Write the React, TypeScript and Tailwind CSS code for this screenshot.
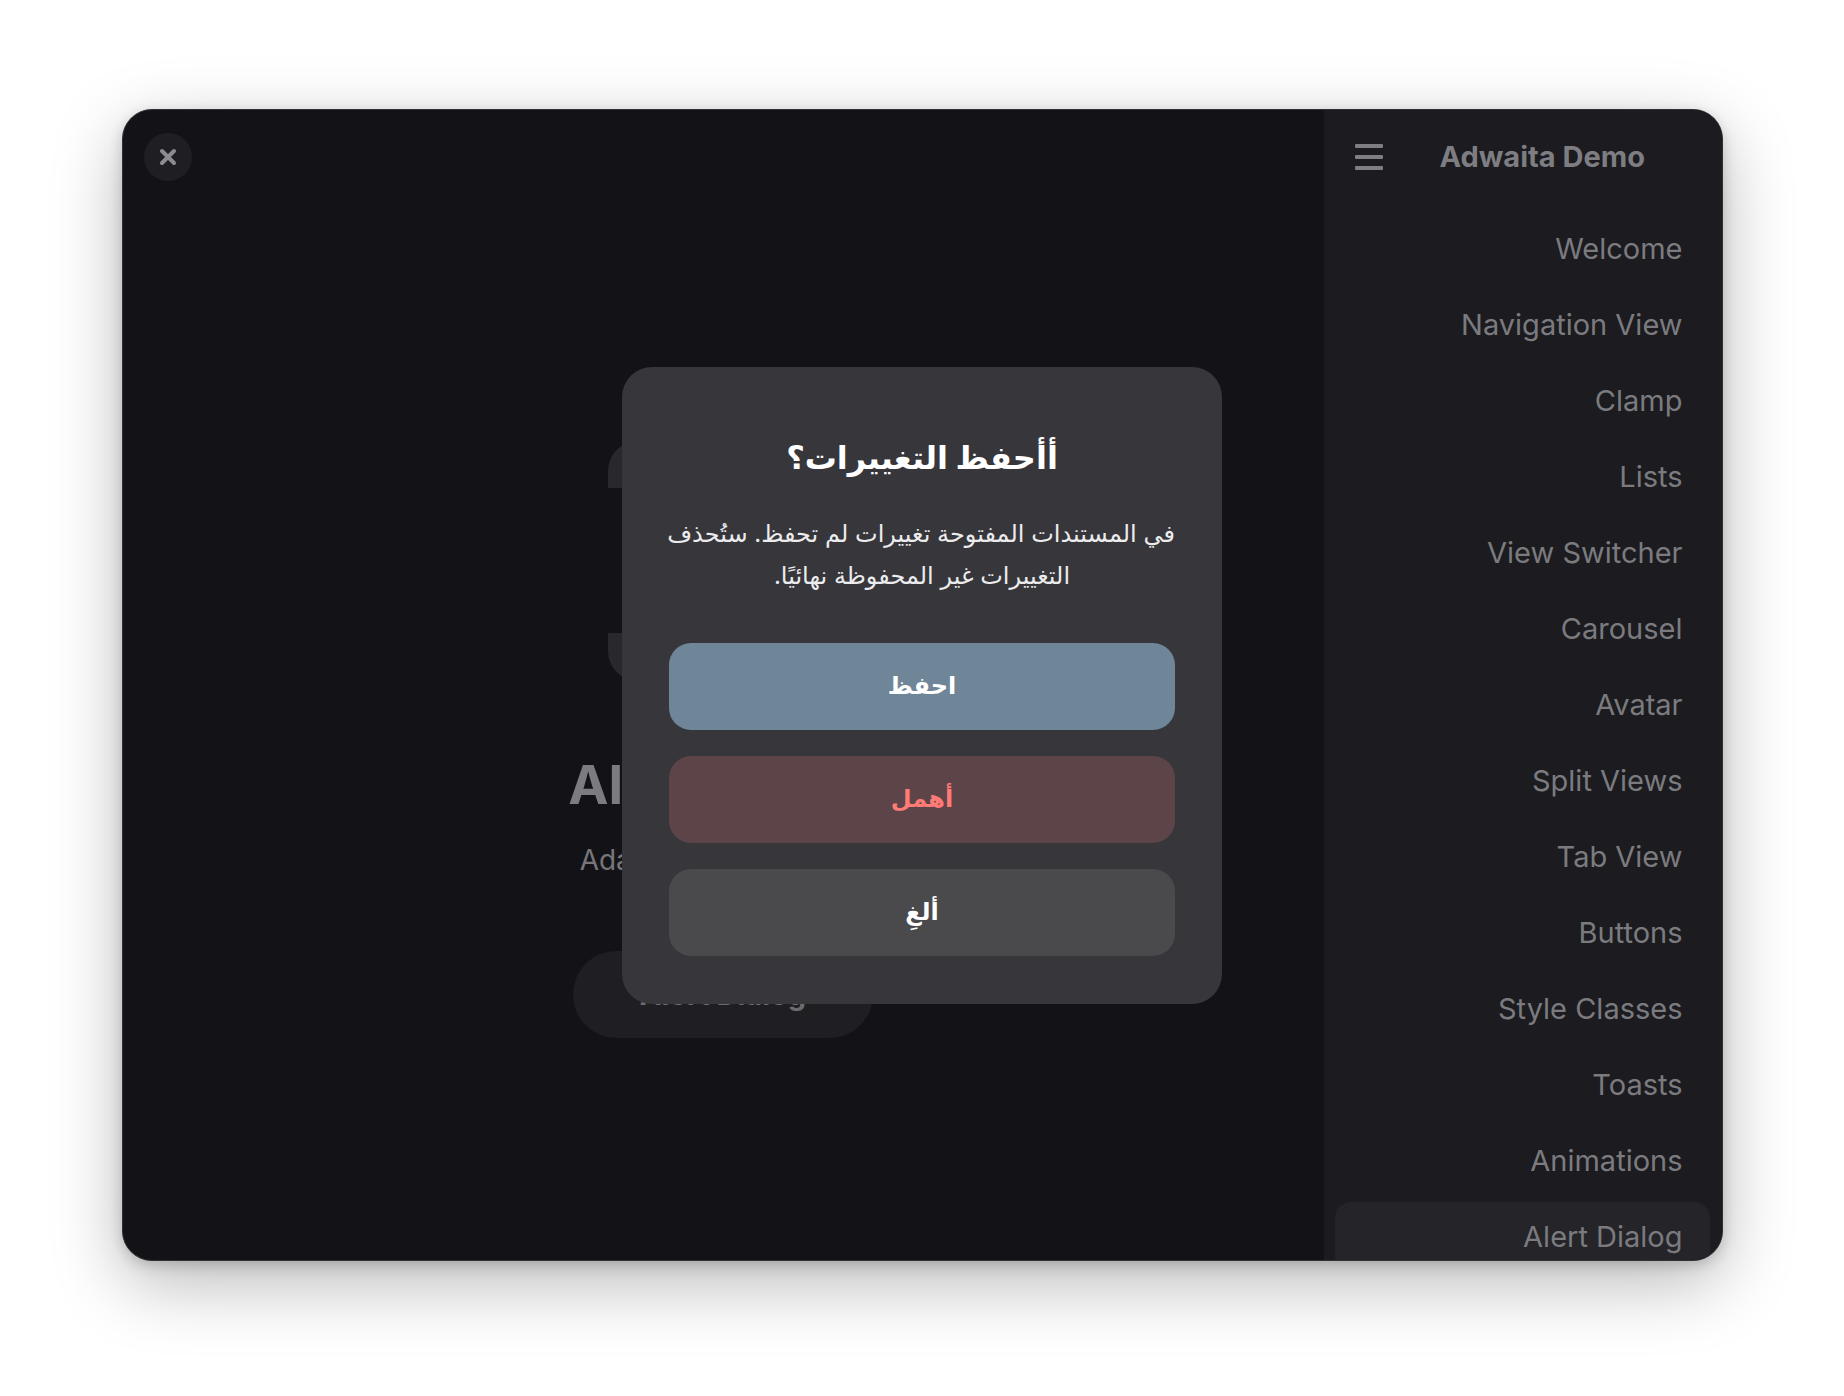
import React from "react"

const pages = [
  "Welcome",
  "Navigation View",
  "Clamp",
  "Lists",
  "View Switcher",
  "Carousel",
  "Avatar",
  "Split Views",
  "Tab View",
  "Buttons",
  "Style Classes",
  "Toasts",
  "Animations",
  "Alert Dialog",
]

function CloseIcon() {
  return (
    <svg width="18" height="18" viewBox="0 0 18 18" fill="none">
      <path d="M3 3 L15 15 M15 3 L3 15" stroke="#8c8c90" strokeWidth="4" strokeLinecap="round" />
    </svg>
  )
}

function MenuIcon() {
  return (
    <svg width="28" height="26" viewBox="0 0 28 26" fill="#7e7e83">
      <rect x="0" y="0" width="28" height="4" rx="1" />
      <rect x="0" y="11" width="28" height="4" rx="1" />
      <rect x="0" y="22" width="28" height="4" rx="1" />
    </svg>
  )
}

function DialogIcon() {
  return (
    <svg width="230" height="240" viewBox="0 0 230 240" fill="#28282d">
      <path d="M30 0 H200 A30 30 0 0 1 230 30 V47 H0 V30 A30 30 0 0 1 30 0 Z" />
      <path d="M0 192 H230 V210 A30 30 0 0 1 200 240 H30 A30 30 0 0 1 0 210 Z" />
      <rect x="40" y="80" width="150" height="80" rx="14" />
    </svg>
  )
}

export default function App() {
  return (
    <div className="min-h-[1396px] w-full bg-white pt-[109px] font-['Inter','Noto_Sans','DejaVu_Sans',sans-serif]">
      <div className="relative mx-auto flex h-[1152px] w-[1601px] overflow-hidden rounded-[30px] border border-[#303035] bg-[#131317] shadow-[0_22px_70px_rgba(0,0,0,0.28),0_4px_14px_rgba(0,0,0,0.18)]">

        {/* content */}
        <div className="flex w-[1201px] flex-col">
          <div className="flex h-[94px] shrink-0 items-center px-[21px]">
            <div className="flex h-[48px] w-[48px] items-center justify-center rounded-full bg-[#1f1f23]">
              <CloseIcon />
            </div>
          </div>

          <div className="flex flex-col items-center pt-[237px]">
            <DialogIcon />
            <h1 className="mt-[70px] text-[54px] font-bold leading-[68px] text-[#7c7c80]">Alert Dialog</h1>
            <p className="mt-[23px] text-[28px] leading-[36px] text-[#77777b]">Adaptive alert dialogs</p>
            <button className="mt-[73px] flex h-[87px] w-[300px] items-center justify-center rounded-full bg-[#1f1f23] text-[29px] font-bold text-[#6c6c70]">
              Alert Dialog
            </button>
          </div>
        </div>

        {/* sidebar */}
        <div className="flex flex-1 flex-col bg-[#1b1b20]">
          <div className="flex h-[94px] shrink-0 items-center pl-[31px]">
            <MenuIcon />
            <span className="ml-[57px] text-[29px] font-bold text-[#7e7e82]">Adwaita Demo</span>
          </div>
          <div className="flex shrink-0 flex-col gap-[6px] pl-[11px] pr-[12px] pt-[10px]">
            {pages.map((p) => (
              <div
                key={p}
                className={
                  "flex h-[70px] shrink-0 items-center justify-end rounded-[16px] pr-[27px] text-[29px] text-[#7b7b7f] " +
                  (p === "Alert Dialog" ? "bg-[#242429]" : "")
                }
              >
                {p}
              </div>
            ))}
          </div>
        </div>

        {/* alert dialog */}
        <div className="absolute inset-0 flex items-center justify-center">
          <div dir="rtl" className="flex w-[600px] flex-col rounded-[30px] bg-[#36363b] px-[47px] pb-[48px] pt-[66px] text-center">
            <h2 className="text-[32px] font-bold leading-[50px] text-white">أأحفظ التغييرات؟</h2>
            <div className="mt-[30px] text-[24px] leading-[42px] text-[#ececee]">
              <p className="whitespace-nowrap">في المستندات المفتوحة تغييرات لم تحفظ. ستُحذف</p>
              <p className="whitespace-nowrap">التغييرات غير المحفوظة نهائيًا.</p>
            </div>
            <div className="mt-[46px] flex flex-col gap-[26px]">
              <button className="flex h-[87px] items-center justify-center rounded-[22px] bg-[#6f8598] text-[24px] font-bold text-white">
                احفظ
              </button>
              <button className="flex h-[87px] items-center justify-center rounded-[22px] bg-[#5c4448] text-[24px] font-bold text-[#ff7b76]">
                أهمل
              </button>
              <button className="flex h-[87px] items-center justify-center rounded-[22px] bg-[#4a4a4d] text-[24px] font-bold text-white">
                ألغِ
              </button>
            </div>
          </div>
        </div>

      </div>
    </div>
  )
}
